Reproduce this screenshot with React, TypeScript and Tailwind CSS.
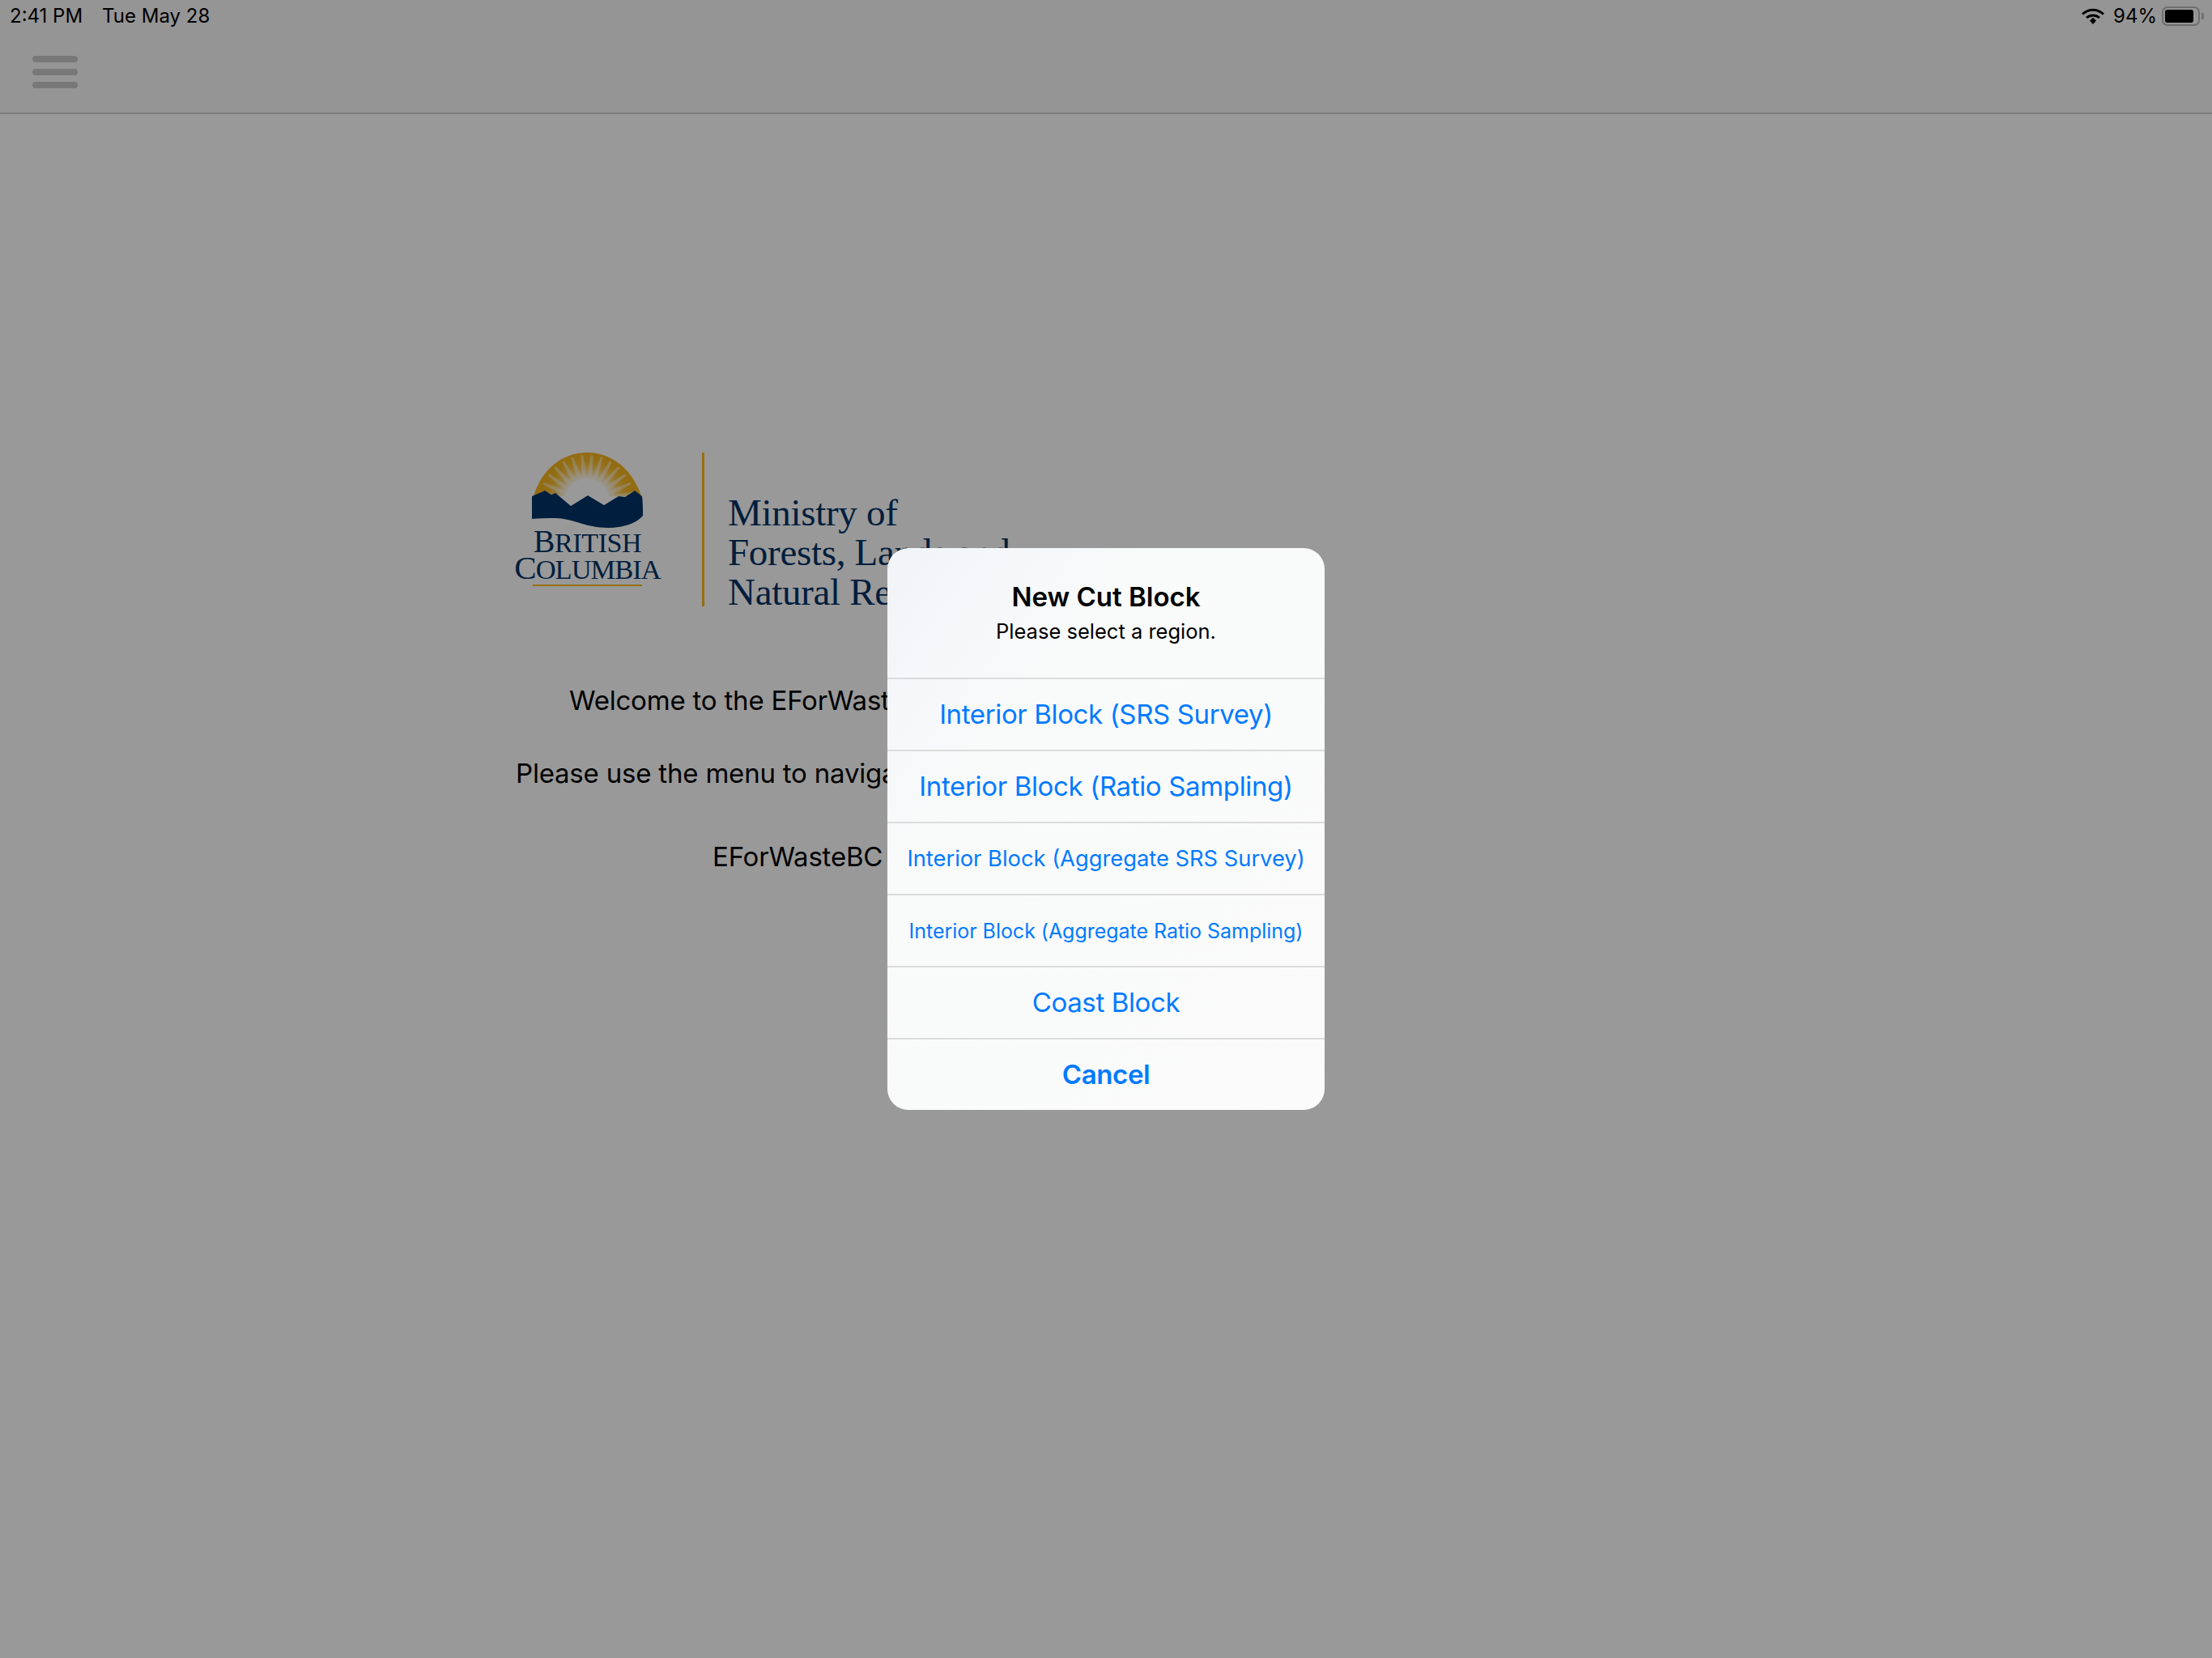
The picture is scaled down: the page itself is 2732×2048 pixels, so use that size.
const rays = [-78, -66, -54, -42, -30, -18, -6, 6, 18, 30, 42, 54, 66, 78];

const regionOptions = [
  { label: "Interior Block (SRS Survey)", size: "text-[33px] tracking-[-0.37px]" },
  { label: "Interior Block (Ratio Sampling)", size: "text-[33px] tracking-[-0.35px]" },
  { label: "Interior Block (Aggregate SRS Survey)", size: "text-[27.3px] pt-[2px]" },
  { label: "Interior Block (Aggregate Ratio Sampling)", size: "text-[25px] tracking-[-0.03px] pt-[2px]" },
  { label: "Coast Block", size: "text-[33px] tracking-[-0.37px]" },
];

function BcEmblem() {
  const rayPoints = (angle: number) => {
    const rad = (angle * Math.PI) / 180;
    const point = (r: number, spread: number) =>
      `${68 + Math.sin(rad + spread) * r},${62 - Math.cos(rad + spread) * r}`;
    return [point(32, -0.09), point(59, -0.025), point(59, 0.025), point(32, 0.09)].join(" ");
  };

  return (
    <svg width="137" height="93" viewBox="0 0 137 93" className="block">
      <defs>
        <radialGradient id="glow" cx="68" cy="60" r="60" gradientUnits="userSpaceOnUse">
          <stop offset="0.45" stopColor="#ffffff" />
          <stop offset="0.62" stopColor="#fff1cc" stopOpacity="0.6" />
          <stop offset="0.95" stopColor="#fcba19" stopOpacity="0" />
        </radialGradient>
      </defs>
      <path d="M2 54C12 20 38 0 68 0C98 0 124 20 135 54Z" fill="#f5b41e" />
      <path d="M2 54C12 20 38 0 68 0C98 0 124 20 135 54Z" fill="url(#glow)" />
      {rays.map((angle) => (
        <polygon key={angle} points={rayPoints(angle)} fill="#ffffff" fillOpacity="0.45" />
      ))}
      <path
        d="M0 54L16 47L24 52L29 50L48 66L69 53L79 59L89 65L107 54L115 55L127 47L136 54C137 62 137 70 137 78C130 87 112 93 95 93C80 93 70 90 62 88C50 84 38 81 30 81C18 81 8 81 0 82Z"
        fill="#003366"
      />
    </svg>
  );
}

function WifiIcon() {
  return (
    <svg width="28" height="20" viewBox="0 0 28 20">
      <path d="M1 7.5C8.5 0.5 19.5 0.5 27 7.5" fill="none" stroke="#000" strokeWidth="3" />
      <path d="M6 12C10.5 8 17.5 8 22 12" fill="none" stroke="#000" strokeWidth="3" />
      <path d="M10 15.5L14 11.8L18 15.5L14 20Z" fill="#000" />
    </svg>
  );
}

export default function App() {
  return (
    <div className="relative w-[2732px] h-[2048px] overflow-hidden bg-white text-black font-['Inter',sans-serif]">
      <header className="h-[141px] bg-[#f8f8f8] border-b-2 border-[#d0d0d0]">
        {/* Status bar */}
        <div className="h-[40px] flex items-center justify-between pl-[12px] pr-[10px] text-[24px] leading-none">
          <div className="flex gap-[24px]">
            <span>2:41 PM</span>
            <span>Tue May 28</span>
          </div>
          <div className="flex items-center">
            <WifiIcon />
            <span className="ml-[11px] mr-[6px]">94%</span>
            <div className="w-[47px] h-[24px] rounded-[7px] border-2 border-[#b8b8b8] p-[2px]">
              <div className="h-full w-[90%] rounded-[3px] bg-black" />
            </div>
            <div className="ml-[2px] w-[3px] h-[8px] rounded-r-[2px] bg-[#b8b8b8]" />
          </div>
        </div>
        {/* Menu button */}
        <div className="ml-[40px] mt-[29px] w-[56px] flex flex-col gap-[8px]">
          <div className="h-[8px] rounded-[4px] bg-[#c8c8c8]" />
          <div className="h-[8px] rounded-[4px] bg-[#c8c8c8]" />
          <div className="h-[8px] rounded-[4px] bg-[#c8c8c8]" />
        </div>
      </header>

      <main className="pl-[630px] pt-[418px]">
        {/* Ministry logo */}
        <div className="flex h-[190px]">
          <div className="w-[191px] mr-[46px] flex flex-col items-center text-[#003366] font-['Liberation_Serif',serif]">
            <BcEmblem />
            <div className="mt-[2px] text-[40px] leading-[30px] tracking-[-0.4px] whitespace-nowrap">
              B<span className="text-[34px]">RITISH</span>
            </div>
            <div className="text-[41px] leading-[30px] tracking-[-1px] whitespace-nowrap">
              C<span className="text-[34.5px]">OLUMBIA</span>
            </div>
            <div className="mt-[4px] w-[135px] h-[2px] bg-[#fcba19]" />
          </div>
          <div className="w-[3px] bg-[#fcba19]" />
          <div className="ml-[29px] pt-[50px] text-[#003366] font-['Liberation_Serif',serif] text-[47px] leading-[49px] tracking-[-0.3px] whitespace-nowrap">
            <div>Ministry of</div>
            <div>Forests, Lands and</div>
            <div>Natural Resource Operations</div>
          </div>
        </div>

        {/* Welcome copy */}
        <div className="mt-[96px] text-[33px] leading-[40px] tracking-[-0.2px] whitespace-nowrap">
          <p className="pl-[73px]">Welcome to the EForWasteBC application</p>
          <p className="pl-[7px] mt-[50px]">Please use the menu to navigate the app</p>
          <p className="pl-[250px] mt-[63px]">EForWasteBC</p>
        </div>
      </main>

      {/* Dim layer + alert */}
      <div className="absolute inset-0 bg-black/40 flex items-center justify-center">
        <div className="w-[540px] rounded-[26px] overflow-hidden bg-gradient-to-br from-[#f1f4f8] via-[#f9fafa] via-30% to-[#fbfbfb]">
          <div className="h-[160px] pt-[38px] text-center">
            <div className="text-[33px] leading-[44px] font-semibold">New Cut Block</div>
            <div className="mt-[3px] text-[25.5px] leading-[36px]">Please select a region.</div>
          </div>
          {regionOptions.map((option) => (
            <div
              key={option.label}
              className={`h-[89px] flex items-center justify-center border-t-2 border-[#dcdcdc] text-[#007aff] whitespace-nowrap ${option.size}`}
            >
              {option.label}
            </div>
          ))}
          <div className="h-[89px] flex items-center justify-center border-t-2 border-[#dcdcdc] text-[#007aff] text-[33px] tracking-[-0.37px] font-semibold">
            Cancel
          </div>
        </div>
      </div>
    </div>
  );
}
